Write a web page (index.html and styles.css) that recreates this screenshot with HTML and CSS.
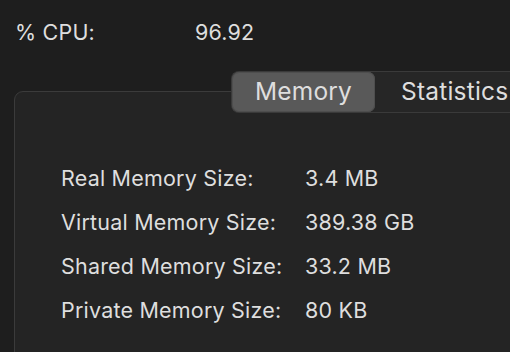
FILE: index.html
```html
<!DOCTYPE html>
<html>
<head>
<meta charset="utf-8">
<link rel="stylesheet" href="styles.css">
</head>
<body>
<div class="page">
  <div class="cpu">
    <span class="cpu-label">% CPU:</span>
    <span class="cpu-value">96.92</span>
  </div>
  <div class="tabs">
    <div class="tab tab-active">Memory</div>
    <div class="tab">Statistics</div>
  </div>
  <div class="panel">
    <div class="rows">
      <div class="row"><span class="label">Real Memory Size:</span><span class="value">3.4 MB</span></div>
      <div class="row"><span class="label">Virtual Memory Size:</span><span class="value">389.38 GB</span></div>
      <div class="row"><span class="label">Shared Memory Size:</span><span class="value">33.2 MB</span></div>
      <div class="row"><span class="label">Private Memory Size:</span><span class="value">80 KB</span></div>
    </div>
  </div>
</div>
</body>
</html>
```
FILE: styles.css
```css
html, body {
  margin: 0;
  padding: 0;
  background: #1e1e1e;
  overflow: hidden;
}
.page {
  width: 510px;
  height: 352px;
  overflow: hidden;
  font-family: Inter, "Noto Sans", sans-serif;
  font-size: 21.5px;
  letter-spacing: 0.2px;
  color: #dedede;
}
.cpu {
  display: flex;
  padding: 20px 0 0 15px;
  line-height: 24px;
}
.cpu-label {
  width: 180px;
}
.tabs {
  position: relative;
  z-index: 1;
  display: flex;
  align-items: stretch;
  margin: 27px 0 0 231px;
  width: 320px;
  height: 40px;
  border: 1px solid #3a3a3a;
  border-right: none;
  border-radius: 8px 0 0 8px;
  background: #262626;
  font-size: 24.5px;
}
.tab {
  display: flex;
  align-items: center;
  line-height: 26px;
  padding-bottom: 2px;
  box-sizing: border-box;
}
.tab-active {
  width: 143px;
  justify-content: center;
  background: #595959;
  border-radius: 7px;
  box-shadow: inset 0 0 0 1px #4e4e4e;
}
.tab + .tab {
  padding-left: 26px;
}
.panel {
  margin: -22px 0 0 14px;
  width: 560px;
  height: 300px;
  border: 1px solid #3b3b3b;
  border-radius: 9px;
  background: #242424;
}
.rows {
  display: flex;
  flex-direction: column;
  gap: 20px;
  padding: 74px 0 0 46px;
}
.row {
  display: flex;
  line-height: 24px;
}
.label {
  width: 244px;
}
```
